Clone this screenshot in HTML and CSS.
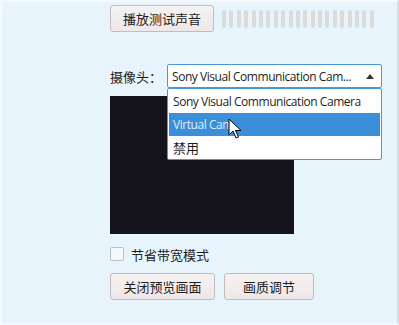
FILE: index.html
```html
<!DOCTYPE html>
<html lang="zh">
<head>
    <meta charset="UTF-8">
    <title>视频设置</title>
    <link rel="stylesheet" href="styles.css">
</head>
<body>

<div class="panel">
    <div class="row sound-row">
        <button class="btn btn-test">播放测试声音</button>
        <div class="meter">
            <span></span><span></span><span></span><span></span><span></span><span></span><span></span>
            <span></span><span></span><span></span><span></span><span></span><span></span><span></span>
            <span></span><span></span><span></span><span></span><span></span><span></span><span></span>
        </div>
    </div>

    <div class="row camera-row">
        <label class="label">摄像头：</label>
        <div class="select">
            <span class="select-text">Sony Visual Communication Cam...</span>
            <span class="arrow"></span>
        </div>
    </div>

    <div class="preview"></div>

    <div class="row check-row">
        <span class="checkbox"></span>
        <span class="check-label">节省带宽模式</span>
    </div>

    <div class="row btn-row">
        <button class="btn btn-close">关闭预览画面</button>
        <button class="btn btn-quality">画质调节</button>
    </div>

    <!-- 下拉列表（展开状态） -->
    <ul class="dropdown">
        <li>Sony Visual Communication Camera</li>
        <li class="active">Virtual Cam</li>
        <li class="cjk">禁用</li>
    </ul>

    <svg class="cursor" width="14" height="22" viewBox="0 0 14 22">
        <path d="M1 1 L1 17 L5 13 L8 20 L10.5 19 L7.5 12.5 L13 12.5 Z" fill="#fff" stroke="#000" stroke-width="1" stroke-linejoin="round"/>
    </svg>
</div>

</body>
</html>
```

FILE: styles.css
```css
body {
    margin: 0;
    background-color: #ffffff;
    font-family: "Open Sans", "Noto Sans CJK SC", sans-serif;
}

.panel {
    position: relative;
    box-sizing: border-box;
    width: 399px;
    height: 325px;
    border: 2px solid #f6f9fb;
    border-right-color: #d8dde0;
    background-color: #e8f4fb;
    padding: 3px 0 0 108px;
    color: #1e1e1e;
}

.row {
    display: flex;
    align-items: center;
}

.btn {
    box-sizing: border-box;
    height: 27px;
    padding: 0;
    border: 1px solid #c4bcbc;
    border-radius: 3px;
    background: linear-gradient(#f6f2f2, #eee8e8);
    font-family: "Noto Sans CJK SC", sans-serif;
    font-size: 13px;
    color: #1e1e1e;
}

.btn-test {
    width: 104px;
}

.meter {
    display: flex;
    gap: 3.4px;
    margin-left: 8px;
    height: 18px;
}

.meter span {
    width: 4px;
    border-radius: 2px;
    background-color: #dcdbdb;
}

.camera-row {
    margin-top: 32px;
}

.label {
    width: 57px;
    font-family: "Noto Sans CJK SC", sans-serif;
    font-size: 13px;
}

.select {
    box-sizing: border-box;
    width: 215px;
    height: 24px;
    display: flex;
    align-items: center;
    padding: 0 0 0 4px;
    background-color: #fff;
    border: 1px solid #4a98dc;
    border-radius: 2px;
    font-size: 12px;
    letter-spacing: -0.45px;
}

.select-text {
    flex: 1;
    white-space: nowrap;
}

.arrow {
    width: 0;
    height: 0;
    margin-right: 7px;
    border-left: 4px solid transparent;
    border-right: 4px solid transparent;
    border-bottom: 5px solid #333;
}

.preview {
    margin-top: 8px;
    width: 184px;
    height: 138px;
    background-color: #15141c;
    background-image: radial-gradient(#221f1c 0.5px, transparent 0.7px);
    background-size: 3px 2px;
}

.check-row {
    margin-top: 13px;
    height: 14px;
}

.checkbox {
    box-sizing: border-box;
    width: 14px;
    height: 14px;
    border: 1px solid #b8c0c6;
    border-radius: 2px;
    background-color: #f4f8fb;
}

.check-label {
    margin-left: 7px;
    font-family: "Noto Sans CJK SC", sans-serif;
    font-size: 13px;
}

.btn-row {
    margin-top: 12px;
    gap: 9px;
}

.btn-close {
    width: 105px;
}

.btn-quality {
    width: 90px;
}

.dropdown {
    position: absolute;
    left: 165px;
    top: 86px;
    box-sizing: border-box;
    width: 215px;
    height: 72px;
    margin: 0;
    padding: 1px;
    list-style: none;
    background-color: #fff;
    border: 1px solid #4a98dc;
    border-radius: 2px;
    font-size: 12px;
    letter-spacing: -0.45px;
}

.dropdown li {
    height: 23px;
    line-height: 23px;
    padding-left: 4px;
}

.dropdown li.active {
    background-color: #3b8fd9;
    color: #dfeefb;
}

.dropdown li.cjk {
    font-family: "Noto Sans CJK SC", sans-serif;
    font-size: 13px;
    letter-spacing: 0;
}

.cursor {
    position: absolute;
    left: 226px;
    top: 116px;
}
```
